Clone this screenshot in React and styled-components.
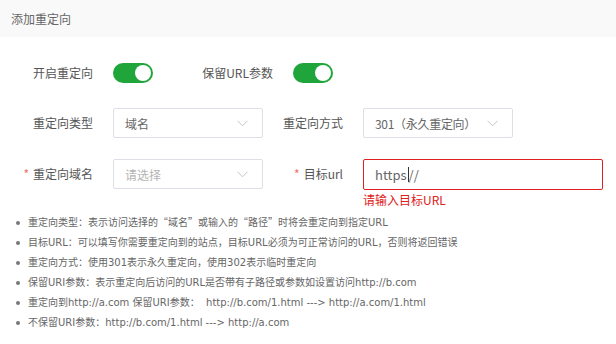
import React from 'react';
import styled, { createGlobalStyle } from 'styled-components';

const GlobalStyle = createGlobalStyle`
  html, body {
    margin: 0;
    padding: 0;
    background: #fff;
  }
  body {
    font-family: "Microsoft YaHei", "Noto Sans CJK SC", sans-serif;
    font-size: 12px;
    color: #555;
  }
`;

const Styled = {
  Page: styled.div`
    width: 616px;
    height: 344px;
    overflow: hidden;
  `,
  Header: styled.div`
    height: 37px;
    background: #f9f9f9;
    display: flex;
    align-items: center;
    padding-left: 11px;
    color: #666;
    font-size: 12px;
  `,
  Body: styled.div`
    padding: 21px 0 0 13px;
  `,
  Row: styled.div`
    display: flex;
    align-items: flex-start;
    margin-bottom: ${(p) => p.gap || 20}px;
  `,
  Item: styled.div`
    display: flex;
    align-items: flex-start;
    margin-right: ${(p) => p.spacing || 0}px;
  `,
  Label: styled.label`
    width: 100px;
    box-sizing: border-box;
    padding-right: 20px;
    height: 30px;
    line-height: 30px;
    text-align: right;
    color: #555;
    white-space: nowrap;
  `,
  Star: styled.span`
    color: #f56c6c;
    margin-right: 4px;
  `,
  SwitchBox: styled.div`
    height: 30px;
    display: flex;
    align-items: center;
  `,
  Switch: styled.span`
    position: relative;
    display: inline-block;
    width: 40px;
    height: 20px;
    border-radius: 10px;
    background: #20a53a;
    &::after {
      content: '';
      position: absolute;
      top: 2px;
      right: 2px;
      width: 16px;
      height: 16px;
      border-radius: 50%;
      background: #fff;
    }
  `,
  Select: styled.div`
    width: 150px;
    height: 30px;
    box-sizing: border-box;
    border: 1px solid #dcdfe6;
    border-radius: 2px;
    display: flex;
    align-items: center;
    justify-content: space-between;
    padding: 0 14px 0 11px;
    color: ${(p) => (p.placeholder ? '#b4b4b4' : '#666')};
    background: #fff;
    span {
      letter-spacing: ${(p) => (p.tight ? '-0.3px' : '0')};
    }
  `,
  Field: styled.div`
    display: flex;
    flex-direction: column;
  `,
  Input: styled.div`
    width: 240px;
    height: 31px;
    box-sizing: border-box;
    border: 1px solid #e02020;
    border-radius: 2px;
    display: flex;
    align-items: center;
    padding-left: 11px;
    color: #666;
    font-size: 13px;
  `,
  Caret: styled.span`
    display: inline-block;
    width: 1px;
    height: 15px;
    background: #333;
    margin: 0 0 0 1px;
  `,
  Error: styled.div`
    color: #e02020;
    font-size: 12px;
    line-height: 18px;
    margin-top: 1px;
  `,
  List: styled.ul`
    margin: 0;
    padding: 0 0 0 16px;
    list-style: none;
    color: #666;
    font-family: "DejaVu Sans", "Noto Sans CJK SC", sans-serif;
    font-size: 10px;
    line-height: 20px;
  `,
  Tip: styled.li`
    display: flex;
    align-items: center;
    white-space: pre;
    &::before {
      content: '';
      flex: none;
      width: 4px;
      height: 4px;
      border-radius: 50%;
      background: #777;
      margin-right: 8px;
    }
  `,
  Quote: styled.span`
    font-family: "Noto Sans CJK SC", sans-serif;
  `,
};

const Chevron = () => (
  <svg width="11" height="7" viewBox="0 0 11 7" fill="none">
    <path d="M0.5 0.8 L5.5 5.8 L10.5 0.8" stroke="#c0c4cc" strokeWidth="1" />
  </svg>
);

const tips = [
  <span>
    重定向类型：表示访问选择的<Styled.Quote>“域名”</Styled.Quote>或输入的
    <Styled.Quote>“路径”</Styled.Quote>时将会重定向到指定URL
  </span>,
  '目标URL：可以填写你需要重定向到的站点，目标URL必须为可正常访问的URL，否则将返回错误',
  '重定向方式：使用301表示永久重定向，使用302表示临时重定向',
  '保留URI参数：表示重定向后访问的URL是否带有子路径或参数如设置访问http://b.com',
  '重定向到http://a.com 保留URI参数：  http://b.com/1.html ---> http://a.com/1.html',
  '不保留URI参数：http://b.com/1.html ---> http://a.com',
];

const App = () => (
  <Styled.Page>
    <GlobalStyle />
    <Styled.Header>添加重定向</Styled.Header>
    <Styled.Body>
      <Styled.Row>
        <Styled.Item spacing={40}>
          <Styled.Label>开启重定向</Styled.Label>
          <Styled.SwitchBox>
            <Styled.Switch />
          </Styled.SwitchBox>
        </Styled.Item>
        <Styled.Item>
          <Styled.Label>保留URL参数</Styled.Label>
          <Styled.SwitchBox>
            <Styled.Switch />
          </Styled.SwitchBox>
        </Styled.Item>
      </Styled.Row>

      <Styled.Row gap={21}>
        <Styled.Item>
          <Styled.Label>重定向类型</Styled.Label>
          <Styled.Select>
            <span>域名</span>
            <Chevron />
          </Styled.Select>
        </Styled.Item>
        <Styled.Item>
          <Styled.Label>重定向方式</Styled.Label>
          <Styled.Select tight>
            <span>301（永久重定向）</span>
            <Chevron />
          </Styled.Select>
        </Styled.Item>
      </Styled.Row>

      <Styled.Row gap={3}>
        <Styled.Item>
          <Styled.Label>
            <Styled.Star>*</Styled.Star>重定向域名
          </Styled.Label>
          <Styled.Select placeholder="true">
            <span>请选择</span>
            <Chevron />
          </Styled.Select>
        </Styled.Item>
        <Styled.Item>
          <Styled.Label>
            <Styled.Star>*</Styled.Star>目标url
          </Styled.Label>
          <Styled.Field>
            <Styled.Input>
              https<Styled.Caret />//
            </Styled.Input>
            <Styled.Error>请输入目标URL</Styled.Error>
          </Styled.Field>
        </Styled.Item>
      </Styled.Row>
    </Styled.Body>

    <Styled.List>
      {tips.map((t, i) => (
        <Styled.Tip key={i}>{t}</Styled.Tip>
      ))}
    </Styled.List>
  </Styled.Page>
);

export default App;
